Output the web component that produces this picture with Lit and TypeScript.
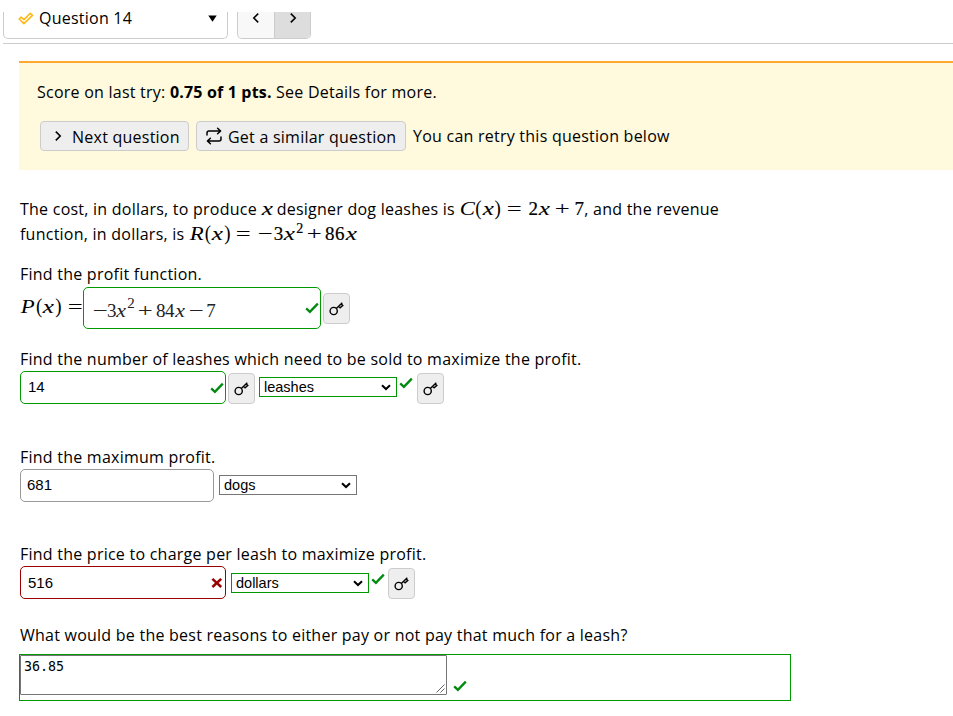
import { LitElement, html, css, svg, TemplateResult } from "lit";
import { customElement, property } from "lit/decorators.js";

type Kind = "check" | "award" | "cross" | "key" | "left" | "right" | "cycle" | "caret" | "down" | "grip";

const shapes: Record<Kind, { w: number; h: number; body: TemplateResult }> = {
  check: { w: 14, h: 12, body: svg`<path d="M1.2 6.3 L4.9 9.8 L12.8 1.6" fill="none" stroke="#008a0e" stroke-width="2.3"/>` },
  award: { w: 16, h: 13, body: svg`<path d="M1.2 7 L3.2 5 L5.9 7.6 L12.3 1.2 L14.5 3.4 L5.9 11.6 Z" fill="#fff" stroke="#fdb913" stroke-width="1.5" stroke-linejoin="round"/>` },
  cross: { w: 12, h: 12, body: svg`<path d="M1.4 1.8 L10.2 10 M10.2 1.8 L1.4 10" fill="none" stroke="#990000" stroke-width="2.5"/>` },
  key: { w: 16, h: 16, body: svg`<g fill="none" stroke="#000" stroke-width="1.4"><circle cx="4.7" cy="10" r="3.6"/><path d="M7.3 7.4 L13.3 1.8 M9.6 5.3 L11.1 6.8 L13.8 4.4 L12.2 2.9"/></g>` },
  left: { w: 8, h: 12, body: svg`<path d="M6.2 1.6 L1.8 6 L6.2 10.4" fill="none" stroke="#000" stroke-width="1.6"/>` },
  right: { w: 8, h: 12, body: svg`<path d="M1.8 1.6 L6.2 6 L1.8 10.4" fill="none" stroke="#000" stroke-width="1.6"/>` },
  cycle: { w: 18, h: 18, body: svg`<g fill="none" stroke="#000" stroke-width="1.5" stroke-linejoin="round" stroke-linecap="round"><path d="M2 8 V6 Q2 4 4 4 H15.5 M12.6 1.2 L15.6 4 L12.6 6.8"/><path d="M16 10 V12 Q16 14 14 14 H2.5 M5.4 11.2 L2.4 14 L5.4 16.8"/></g>` },
  caret: { w: 9, h: 7, body: svg`<path d="M0.3 0.4 H8.7 L4.5 6.8 Z" fill="#000"/>` },
  down: { w: 10, h: 7, body: svg`<path d="M1 1.2 L5 5 L9 1.2" fill="none" stroke="#000" stroke-width="2"/>` },
  grip: { w: 9, h: 9, body: svg`<path d="M0.5 8.5 L8.5 0.5 M4.5 8.5 L8.5 4.5" fill="none" stroke="#555" stroke-width="0.9"/>` },
};

@customElement("ui-icon")
class UiIcon extends LitElement {
  @property() kind: Kind = "check";
  static styles = css`
    :host { display: inline-block; flex: none; line-height: 0; }
    svg { display: block; }
  `;
  render() {
    const s = shapes[this.kind];
    return html`<svg width=${s.w} height=${s.h} viewBox="0 0 ${s.w} ${s.h}">${s.body}</svg>`;
  }
}

type Token = [text: string, width: number, style?: string];

@customElement("math-line")
class MathLine extends LitElement {
  @property({ attribute: false }) tokens: Token[] = [];
  static styles = css`
    :host { display: inline-block; white-space: nowrap; letter-spacing: 0; font: 19px/20px "Liberation Serif", serif; -webkit-text-stroke: 0.2px #000; }
    :host(.thin) { -webkit-text-stroke: 0; color: #222; }
    .t { display: inline-block; text-align: center; }
    .t span { display: inline-block; }
    .v { font-style: italic; -webkit-text-stroke: 0; }
    .v span { transform: scaleX(1.2); }
    .x { font-style: italic; -webkit-text-stroke: 0.1px #000; }
    .x span { transform: scaleX(1.32); }
    .y { font-style: italic; }
    .y span { transform: scaleX(1.15); }
    .o { -webkit-text-stroke: 0; }
    .o span { transform: scaleX(1.4); }
    .p { -webkit-text-stroke: 0; }
    .p span { transform: scaleY(1.08); }
    .s { font-size: 14px; line-height: 10px; vertical-align: 7px; }
    .s2 { font-size: 15px; line-height: 10px; vertical-align: 9px; }
  `;
  render() {
    return html`${this.tokens.map(
      ([text, w, kind]) => html`<span class="t ${kind ?? ""}" style="width:${w}px"><span>${text}</span></span>`
    )}`;
  }
}

const fn = (name: string): Token[] => [[name, 16, "v"], ["(", 6, "p"], ["x", 13, "x"], [")", 7, "p"]];
const cost: Token[] = [...fn("C"), ["=", 27, "o"], ["2", 10], ["x", 12, "x"], ["+", 24, "o"], ["7", 10]];
const revenue: Token[] = [...fn("R"), ["=", 26, "o"], ["−", 17, "o"], ["3", 9], ["x", 13, "x"], ["2", 8, "s"], ["+", 21, "o"], ["8", 10], ["6", 10], ["x", 12, "x"]];
const profit: Token[] = [...fn("P"), ["=", 27, "o"]];
const answer: Token[] = [["−", 13, "o"], ["3", 9], ["x", 11, "y"], ["2", 8, "s2"], ["+", 21, "o"], ["8", 9], ["4", 9], ["x", 12, "y"], ["−", 20, "o"], ["7", 10]];

@customElement("app-root")
class AppRoot extends LitElement {
  static styles = css`
    :host { display: block; width: 953px; height: 716px; overflow: hidden; background: #fff; color: #000;
      font: 16px/25px "Open Sans", sans-serif; letter-spacing: 0.24px; }
    * { box-sizing: border-box; }
    .bar { display: flex; height: 32px; margin: 12px 0 0 3px; border-bottom: 1px solid #ccc; }
    .picker { display: flex; align-items: center; width: 225px; height: 27px; padding: 0 10px 0 14px;
      border: 1px solid #ccc; border-top: 0; border-radius: 0 0 5px 5px; }
    .picker span { flex: 1; margin-left: 5px; position: relative; top: -7px; }
    .picker ui-icon { margin-top: -14px; }
    .nav { display: flex; width: 74px; height: 27px; margin-left: 9px; overflow: hidden;
      border: 1px solid #ccc; border-top: 0; border-radius: 0 0 5px 5px; background: #f8f8f8; }
    .nav div { flex: 1; display: flex; justify-content: center; padding-right: 1px; }
    .nav .next { border-left: 1px solid #ccc; background: #ddd; padding-right: 0; }
    .banner { height: 109px; margin: 17px 0 0 19px; padding: 17px 0 0 18px; background: #fff9dd; border-top: 2px solid #ffa931; }
    .banner b { letter-spacing: 0.17px; }
    .actions { display: flex; align-items: center; margin: 16px 0 0 3px; height: 30px; }
    .btn { display: flex; align-items: center; height: 30px; padding-top: 2px; background: #eee; border: 1px solid #ccc; border-radius: 4px; white-space: nowrap; }
    .btn.go { width: 149px; padding-left: 13px; gap: 10px; }
    .btn.again { width: 210px; margin: 0 7px; padding-left: 8px; gap: 5px; }
    .btn ui-icon { margin-top: -3px; }
    p { margin: 0; height: 25px; white-space: nowrap; }
    .body { padding: 26px 0 0 20px; }
    .body p { line-height: 27px; }
    .gap15 { margin-top: 15px; }
    .gap17 { margin-top: 17px; }
    .gap40 { margin-top: 40px; }
    .gap39 { margin-top: 39px; }
    .gap23 { margin-top: 23px; }
    .row { display: flex; height: 33px; font: 15px/20px "Liberation Sans", sans-serif; letter-spacing: 0; }
    .row.tall { height: 43px; padding-top: 1px; }
    .lhs { margin: 10px -6px 0 0; }
    .field { display: flex; align-items: center; justify-content: space-between; border: 1px solid #999; border-radius: 5px; height: 33px; width: 194px; padding: 0 1px 2px 6px; }
    .field.ok { border-color: #090; width: 206px; padding-left: 7px; }
    .field.bad { border-color: #900; width: 206px; padding: 0 2px 0 7px; }
    .field.eq { width: 238px; height: 42px; padding: 0 1px 0 10px; }
    .field ui-icon { margin-top: 3px; }
    .field.bad ui-icon { margin-top: 1px; }
    .field.eq ui-icon { margin-top: 0; }
    .field .thin { margin-top: 3px; }
    .key { display: flex; align-items: center; justify-content: center; width: 27px; height: 31px; margin: 2px 0 0 2px; background: #eee; border: 1px solid #ccc; border-radius: 4px; }
    .tall .key { margin-top: 6px; }
    .select { display: flex; align-items: center; justify-content: space-between; width: 138px; height: 20px; margin: 6px 0 0 4px; padding: 0 5px 0 4px; border: 1px solid #767676; font-size: 14.5px; line-height: 18px; }
    .select.ok { border-color: #090; }
    .select.sq { margin-left: 5px; }
    .select.low { margin-top: 7px; }
    .mark { margin: 6px 2px 0 2px; }
    .mark.near { margin: 7px 1px 0 2px; }
    .essay { display: flex; width: 772px; height: 47px; margin: 7px 0 0 -1px; border: 1px solid #090; }
    .area { display: flex; justify-content: space-between; width: 427px; height: 40px; padding: 2px 1px 1px 3px; border: 1px solid #767676; border-radius: 1px; font: 13.33px/18px "DejaVu Sans Mono", monospace; letter-spacing: 0; }
    .area ui-icon { align-self: flex-end; }
    .essay > ui-icon { margin: 25px 0 0 6px; }
  `;
  key = html`<div class="key"><ui-icon kind="key"></ui-icon></div>`;
  render() {
    return html`
      <div class="bar">
        <div class="picker"><ui-icon kind="award"></ui-icon><span>Question 14</span><ui-icon kind="caret"></ui-icon></div>
        <div class="nav"><div><ui-icon kind="left"></ui-icon></div><div class="next"><ui-icon kind="right"></ui-icon></div></div>
      </div>
      <div class="banner">
        <p>Score on last try: <b>0.75 of 1 pts.</b> See Details for more.</p>
        <div class="actions">
          <div class="btn go"><ui-icon kind="right"></ui-icon>Next question</div>
          <div class="btn again"><ui-icon kind="cycle"></ui-icon>Get a similar question</div>
          <p>You can retry this question below</p>
        </div>
      </div>
      <div class="body">
        <p>The cost, in dollars, to produce <math-line .tokens=${[["x", 11, "x"]]}></math-line> designer dog leashes is <math-line .tokens=${cost}></math-line>, and the revenue</p>
        <p>function, in dollars, is <math-line .tokens=${revenue}></math-line></p>
        <p class="gap15">Find the profit function.</p>
        <div class="row tall">
          <math-line class="lhs" .tokens=${profit}></math-line>
          <div class="field ok eq"><math-line class="thin" .tokens=${answer}></math-line><ui-icon kind="check"></ui-icon></div>
          ${this.key}
        </div>
        <p class="gap17">Find the number of leashes which need to be sold to maximize the profit.</p>
        <div class="row">
          <div class="field ok">14<ui-icon kind="check"></ui-icon></div>${this.key}
          <div class="select ok">leashes<ui-icon kind="down"></ui-icon></div>
          <ui-icon class="mark" kind="check"></ui-icon>${this.key}
        </div>
        <p class="gap40">Find the maximum profit.</p>
        <div class="row">
          <div class="field">681</div>
          <div class="select sq">dogs<ui-icon kind="down"></ui-icon></div>
        </div>
        <p class="gap39">Find the price to charge per leash to maximize profit.</p>
        <div class="row">
          <div class="field bad">516<ui-icon kind="cross"></ui-icon></div>
          <div class="select ok sq low">dollars<ui-icon kind="down"></ui-icon></div>
          <ui-icon class="mark near" kind="check"></ui-icon>${this.key}
        </div>
        <p class="gap23">What would be the best reasons to either pay or not pay that much for a leash?</p>
        <div class="essay">
          <div class="area">36.85<ui-icon kind="grip"></ui-icon></div>
          <ui-icon kind="check"></ui-icon>
        </div>
      </div>
    `;
  }
}
